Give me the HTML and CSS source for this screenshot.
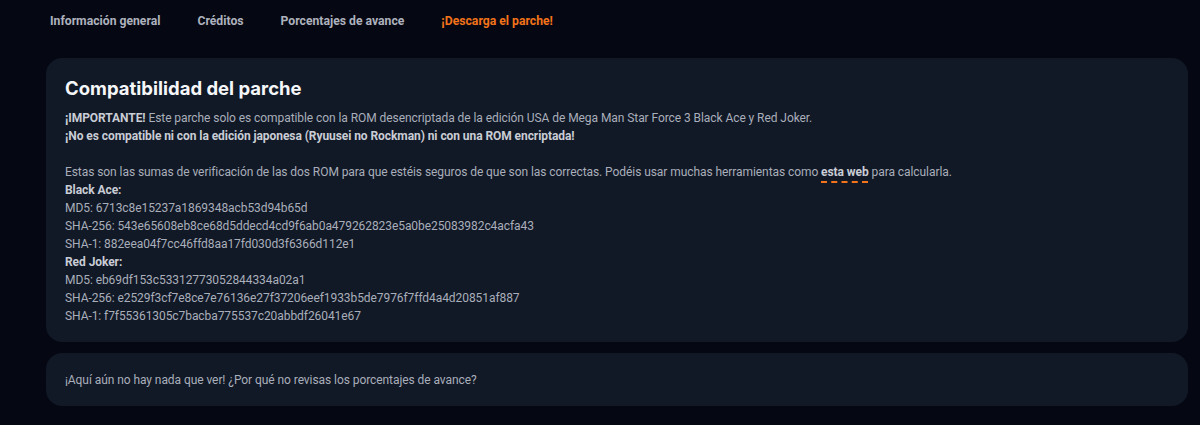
FILE: index.html
```html
<!DOCTYPE html>
<html lang="es">

<head>
    <meta charset="UTF-8">
    <meta name="viewport" content="width=device-width, initial-scale=1.0">
    <title>Mega Man Star Force 3 - Parche</title>
    <link rel="stylesheet" href="styles.css">
</head>

<body>
    <nav class="tabs">
        <a class="tab" href="#">Información general</a>
        <a class="tab" href="#">Créditos</a>
        <a class="tab" href="#">Porcentajes de avance</a>
        <a class="tab active" href="#">¡Descarga el parche!</a>
    </nav>

    <div class="content">
        <section class="card">
            <h2>Compatibilidad del parche</h2>
            <p class="notice">
                <strong>¡IMPORTANTE!</strong> Este parche solo es compatible con la ROM desencriptada de la edición USA de Mega Man Star Force 3 Black Ace y Red Joker.<br>
                <strong>¡No es compatible ni con la edición japonesa (Ryuusei no Rockman) ni con una ROM encriptada!</strong>
            </p>
            <p>
                Estas son las sumas de verificación de las dos ROM para que estéis seguros de que son las correctas. Podéis usar muchas herramientas como <a class="link" href="#">esta web</a> para calcularla.<br>
                <strong>Black Ace:</strong><br>
                MD5: 6713c8e15237a1869348acb53d94b65d<br>
                SHA-256: 543e65608eb8ce68d5ddecd4cd9f6ab0a479262823e5a0be25083982c4acfa43<br>
                SHA-1: 882eea04f7cc46ffd8aa17fd030d3f6366d112e1<br>
                <strong>Red Joker:</strong><br>
                MD5: eb69df153c53312773052844334a02a1<br>
                SHA-256: e2529f3cf7e8ce7e76136e27f37206eef1933b5de7976f7ffd4a4d20851af887<br>
                SHA-1: f7f55361305c7bacba775537c20abbdf26041e67
            </p>
        </section>

        <section class="card">
            <p>¡Aquí aún no hay nada que ver! ¿Por qué no revisas los porcentajes de avance?</p>
        </section>
    </div>
</body>

</html>
```

FILE: styles.css
```css
/* Reset */
body,
h2,
p {
    margin: 0;
    padding: 0;
}

body {
    background-color: #050813;
    color: #a9afba;
    font-family: 'Roboto', sans-serif;
    font-size: 12px;
    line-height: 18px;
    letter-spacing: -0.07px;
}

/* Top navigation */
.tabs {
    display: flex;
    gap: 37px;
    padding: 12px 0 0 50px;
    height: 31px;
}

.tab {
    color: #aeb2bd;
    text-decoration: none;
    font-family: 'Roboto', sans-serif;
    font-weight: 700;
    font-size: 12.2px;
    line-height: 18px;
    letter-spacing: 0;
}

.tab.active {
    color: #f3731a;
}

/* Cards */
.content {
    display: flex;
    flex-direction: column;
    gap: 11px;
    margin: 15px 12px 0 46px;
}

.card {
    background-color: #111826;
    border-radius: 16px;
    padding: 18px 19px 17px 19px;
}

.card h2 {
    color: #f5f6f8;
    font-family: 'Inter', sans-serif;
    font-weight: 700;
    font-size: 18.5px;
    line-height: 24px;
    letter-spacing: 0;
    margin-bottom: 9px;
}

.card .notice {
    margin-bottom: 18px;
}

.card strong {
    color: #c9cdd5;
    font-weight: 700;
}

a.link {
    color: #c9cdd5;
    font-weight: 700;
    text-decoration: underline dashed #f3731a;
    text-decoration-thickness: 2px;
    text-underline-offset: 5px;
}
```
